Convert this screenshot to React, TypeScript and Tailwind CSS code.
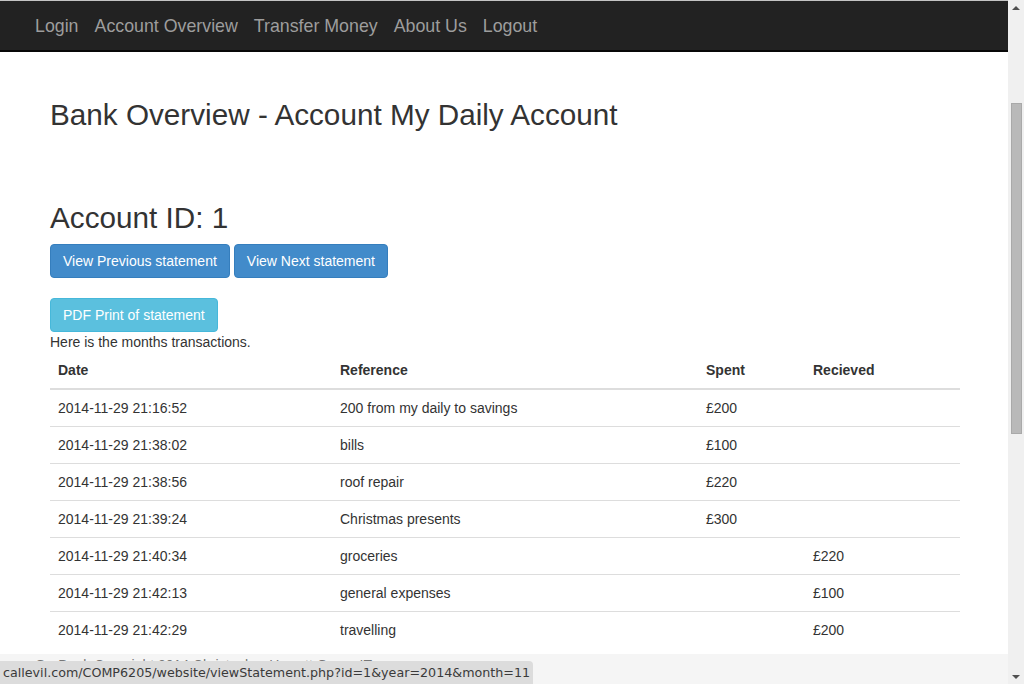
const navLinks = ["Login", "Account Overview", "Transfer Money", "About Us", "Logout"]

interface Txn {
  date: string
  reference: string
  spent: string
  recieved: string
}

const transactions: Txn[] = [
  { date: "2014-11-29 21:16:52", reference: "200 from my daily to savings", spent: "£200", recieved: "" },
  { date: "2014-11-29 21:38:02", reference: "bills", spent: "£100", recieved: "" },
  { date: "2014-11-29 21:38:56", reference: "roof repair", spent: "£220", recieved: "" },
  { date: "2014-11-29 21:39:24", reference: "Christmas presents", spent: "£300", recieved: "" },
  { date: "2014-11-29 21:40:34", reference: "groceries", spent: "", recieved: "£220" },
  { date: "2014-11-29 21:42:13", reference: "general expenses", spent: "", recieved: "£100" },
  { date: "2014-11-29 21:42:29", reference: "travelling", spent: "", recieved: "£200" },
]

function Navbar() {
  return (
    <nav className="h-[52px] border-t border-t-[#c4c4c4] border-b-2 border-b-[#080808] bg-[#222] flex items-center pl-[27px]">
      {navLinks.map((l) => (
        <a key={l} className="px-2 text-[17.8px] text-[#9d9d9d] leading-[20px]">
          {l}
        </a>
      ))}
    </nav>
  )
}

function Scrollbar() {
  return (
    <div className="w-4 h-full bg-[#f0f0f0] flex flex-col items-center">
      <div className="h-[15px] flex items-center justify-center">
        <div className="w-0 h-0 border-l-[4px] border-r-[4px] border-b-[4px] border-l-transparent border-r-transparent border-b-[#505050]" />
      </div>
      <div className="mt-[88px] w-[11px] h-[331px] bg-[#b9b9b9] border border-[#a9a9a9]" />
      <div className="flex-1" />
      <div className="h-[15px] flex items-center justify-center">
        <div className="w-0 h-0 border-l-[4px] border-r-[4px] border-t-[4px] border-l-transparent border-r-transparent border-t-[#505050]" />
      </div>
    </div>
  )
}

function Statement() {
  return (
    <div className="pl-[50px] w-[960px] text-[#333] text-[14px] leading-[20px]">
      <h2 className="mt-[46px] text-[29.7px] leading-[33px] font-normal">Bank Overview - Account My Daily Account</h2>
      <h2 className="mt-[70px] text-[29.7px] leading-[33px] font-normal">Account ID: 1</h2>
      <div className="mt-[10px] flex gap-1">
        <button className="h-[34px] px-3 rounded bg-[#428bca] border border-[#357ebd] text-white text-[14px]">
          View Previous statement
        </button>
        <button className="h-[34px] px-3 rounded bg-[#428bca] border border-[#357ebd] text-white text-[14px]">
          View Next statement
        </button>
      </div>
      <button className="mt-5 h-[34px] px-3 rounded bg-[#5bc0de] border border-[#46b8da] text-white text-[14px]">
        PDF Print of statement
      </button>
      <p>Here is the months transactions.</p>
      <table className="w-[910px] border-collapse text-left">
        <thead>
          <tr className="border-b-2 border-[#ddd]">
            <th className="p-2 w-[282px] font-bold">Date</th>
            <th className="p-2 w-[366px] font-bold">Reference</th>
            <th className="p-2 w-[107px] font-bold">Spent</th>
            <th className="p-2 font-bold">Recieved</th>
          </tr>
        </thead>
        <tbody>
          {transactions.map((t, i) => (
            <tr key={i} className={i > 0 ? "border-t border-[#ddd]" : ""}>
              <td className="p-2 h-[36px]">{t.date}</td>
              <td className="p-2">{t.reference}</td>
              <td className="p-2">{t.spent}</td>
              <td className="p-2">{t.recieved}</td>
            </tr>
          ))}
        </tbody>
      </table>
    </div>
  )
}

export default function App() {
  return (
    <div className="w-[1024px] h-[684px] flex overflow-hidden bg-white font-['Liberation_Sans',Arial,sans-serif]">
      <div className="relative flex-1 h-full overflow-hidden">
        <Navbar />
        <Statement />
        <footer className="absolute left-0 right-0 bottom-0 h-[30px] bg-[#f5f5f5] pl-[35px] pt-[1px] text-[14px] text-[#777] leading-[20px]">
          OurBank Copyright 2014 Christopher Hewett Group IT
        </footer>
        <div className="absolute left-0 bottom-0 h-[23px] w-[533px] bg-[#dcdcdc] rounded-tr-[4px] pl-[3px] flex items-center text-[12.7px] text-[#3a3a3a] font-['DejaVu_Sans',sans-serif] whitespace-nowrap">
          callevil.com/COMP6205/website/viewStatement.php?id=1&amp;year=2014&amp;month=11
        </div>
      </div>
      <Scrollbar />
    </div>
  )
}
